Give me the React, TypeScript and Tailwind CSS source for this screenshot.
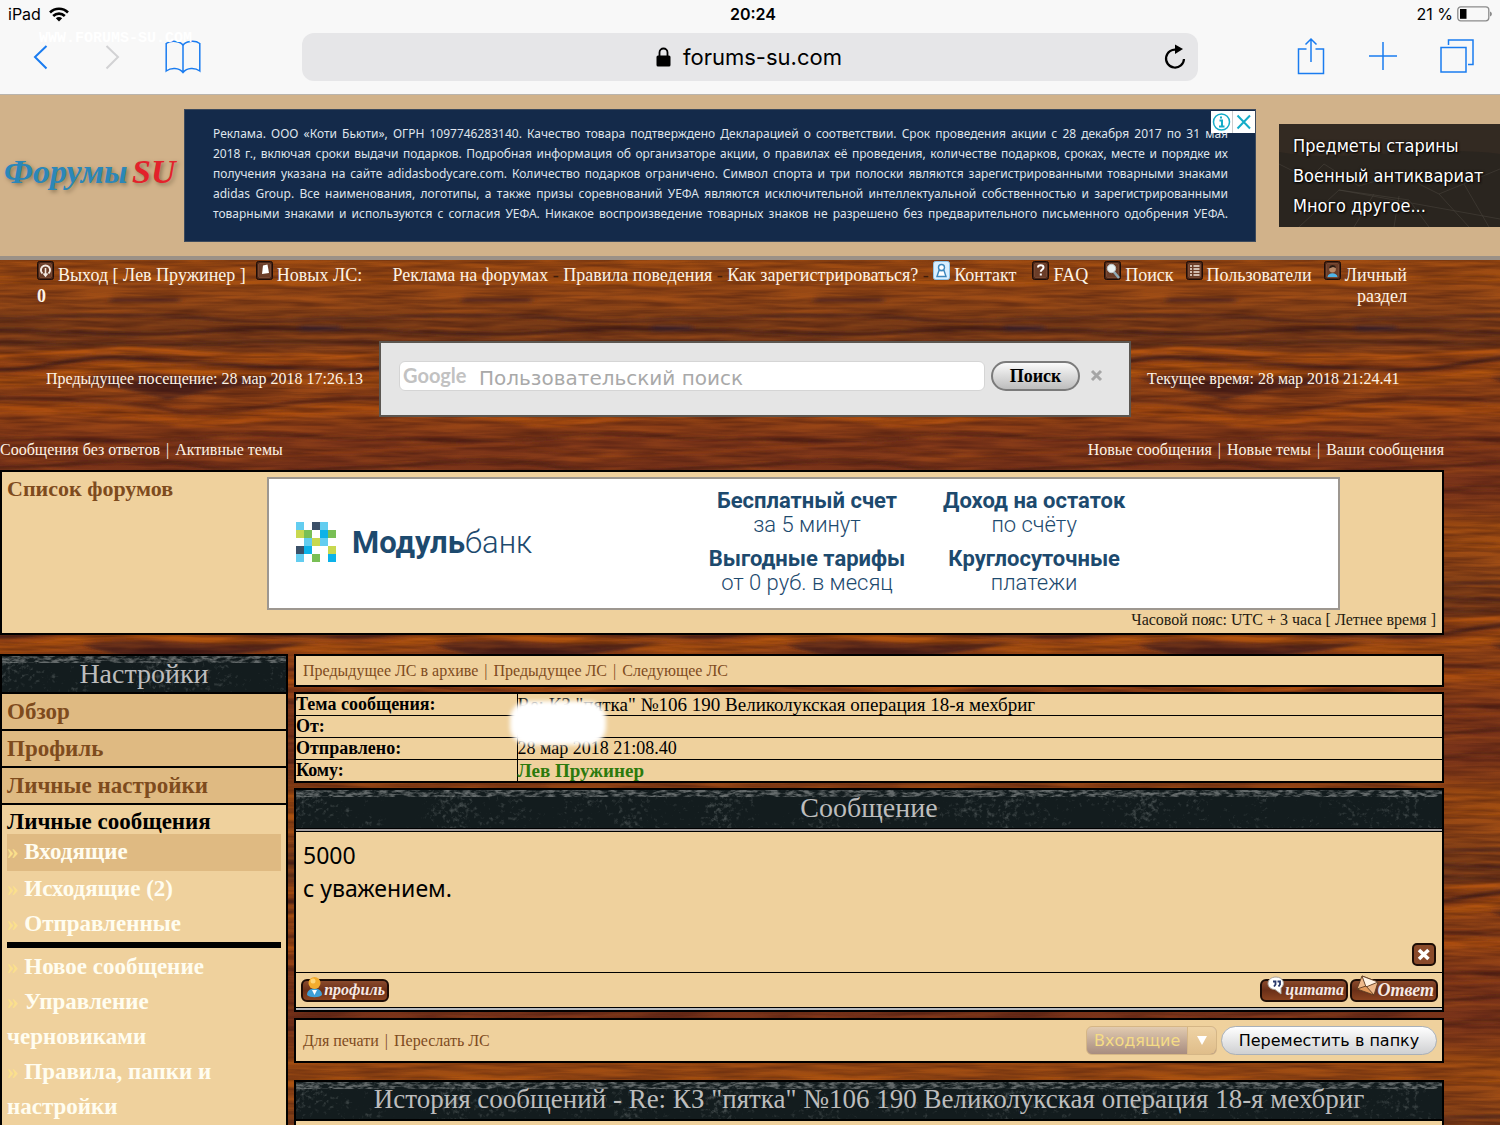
import React from "react";

const BLUE = "#1a7cf0";

const GRAIN: [string, string, number][] = [
  ["M0 96C60 96 120 84 180 92S290 96 352 96", "#b4530c", 5],
  ["M0 110C50 110 70 94 130 98S290 110 352 110", "#3c1a17", 4],
  ["M0 122C60 122 80 104 150 108S290 122 352 122", "#b0520c", 8],
  ["M0 138C60 138 120 140 170 150S290 138 352 138", "#4b1f14", 3],
  ["M0 148C60 148 120 150 170 160S290 148 352 148", "#a94b0e", 7],
  ["M0 70C60 70 120 78 200 72S310 70 352 70", "#4b2419", 4],
  ["M0 58C60 58 120 52 200 58S310 58 352 58", "#57291a", 3],
  ["M0 82C60 82 120 88 200 84S310 82 352 82", "#4f2619", 3],
  ["M0 20C60 20 120 14 200 20S310 20 352 20", "#a9510f", 5],
  ["M0 178C60 178 130 186 200 178S310 178 352 178", "#552015", 3],
  ["M0 192C60 192 130 176 200 190S310 192 352 192", "#893a15", 3],
  ["M0 208C60 208 130 192 200 206S310 208 352 208", "#552216", 3],
  ["M0 230C60 230 130 220 200 232S310 230 352 230", "#552216", 3],
];

function Wood() {
  return (
    <svg className="absolute inset-0 -z-10 h-full w-full" aria-hidden="true">
      <defs>
        <filter id="grain" x="0" y="0" width="100%" height="100%" colorInterpolationFilters="sRGB">
          <feTurbulence type="fractalNoise" baseFrequency="0.014 0.2" numOctaves={3} seed={7} stitchTiles="stitch" />
          <feColorMatrix values="0 0 0 0 0.2  0 0 0 0 0.06  0 0 0 0 0.05  2 0 0 0 -0.7" />
        </filter>
        <filter id="shine" x="0" y="0" width="100%" height="100%" colorInterpolationFilters="sRGB">
          <feTurbulence type="fractalNoise" baseFrequency="0.014 0.14" numOctaves={3} seed={23} stitchTiles="stitch" />
          <feColorMatrix values="0 0 0 0 0.75  0 0 0 0 0.36  0 0 0 0 0.08  2 0 0 0 -0.8" />
        </filter>
        <filter id="soft" filterUnits="userSpaceOnUse" x="-30" y="-20" width="412" height="307">
          <feGaussianBlur stdDeviation="3 1.600" />
        </filter>
        <linearGradient id="woodBase" x1="0" y1="0" x2="0" y2="1">
          <stop offset="0" stopColor="#9c4a10" />
          <stop offset="0.14" stopColor="#964815" />
          <stop offset="0.24" stopColor="#783a16" />
          <stop offset="0.32" stopColor="#793a18" />
          <stop offset="0.4" stopColor="#9a4512" />
          <stop offset="0.5" stopColor="#8e4115" />
          <stop offset="0.58" stopColor="#984413" />
          <stop offset="0.68" stopColor="#7d3518" />
          <stop offset="0.86" stopColor="#783219" />
          <stop offset="0.95" stopColor="#843b15" />
          <stop offset="1" stopColor="#9c4a10" />
        </linearGradient>
        <g id="streaks">
          {GRAIN.map(([d, stroke, w]) => (
            <path key={d} d={d} fill="none" stroke={stroke} strokeWidth={w} />
          ))}
          <path d="M82 118C130 108 200 122 320 114C280 124 200 130 168 140C140 132 110 128 82 118Z" fill="#3f1d18" opacity="0.800" />
          <path d="M300 68h40" stroke="#3a232a" strokeWidth="6" />
          <path d="M110 40h70" stroke="#5a2c1c" strokeWidth="5" />
        </g>
        <pattern id="wood" width="352" height="267" patternUnits="userSpaceOnUse">
          <rect width="352" height="267" fill="url(#woodBase)" />
          <g filter="url(#soft)">
            <use href="#streaks" x="-352" />
            <use href="#streaks" />
            <use href="#streaks" x="352" />
          </g>
          <rect width="352" height="267" filter="url(#shine)" opacity="0.35" />
          <rect width="352" height="267" filter="url(#grain)" opacity="0.5" />
        </pattern>
      </defs>
      <rect width="100%" height="100%" fill="url(#wood)" />
    </svg>
  );
}

function StoneTitle({ id, children, className }: { id: string; children: React.ReactNode; className: string }) {
  return (
    <h2 className={"relative isolate overflow-hidden bg-[#131c1e] text-center text-[#bdbdbd] " + className}>
      <svg className="absolute inset-0 -z-10 h-full w-full" aria-hidden="true">
        <defs>
          <filter id={id} x="0" y="0" width="100%" height="100%" colorInterpolationFilters="sRGB">
            <feTurbulence type="fractalNoise" baseFrequency="0.022 0.03" numOctaves={2} seed={4} result="cloud" />
            <feTurbulence type="fractalNoise" baseFrequency="0.22" numOctaves={3} seed={11} result="fine" />
            <feComposite in="cloud" in2="fine" operator="arithmetic" k1="1.600" k2="0" k3="0.200" k4="0" />
            <feColorMatrix values="0 0 0 0 0.45  0 0 0 0 0.48  0 0 0 0 0.48  2.600 0 0 0 -0.950" />
          </filter>
          <filter id={id + "t"} x="0" y="0" width="100%" height="100%" colorInterpolationFilters="sRGB">
            <feTurbulence type="fractalNoise" baseFrequency="0.12 0.35" numOctaves={3} seed={9} />
            <feColorMatrix values="0 0 0 0 0.5  0 0 0 0 0.52  0 0 0 0 0.52  3 0 0 0 -1.1" />
          </filter>
        </defs>
        <rect width="100%" height="100%" filter={"url(#" + id + ")"} opacity="0.7" />
        <rect width="100%" height="7" filter={"url(#" + id + "t)"} opacity="0.75" />
      </svg>
      {children}
    </h2>
  );
}

function NavIcon({ kind }: { kind: string }) {
  const light = kind === "contact";
  return (
    <svg className="mr-1 inline-block h-[19px] w-[17px] align-[1px]" viewBox="0 0 17 19" aria-hidden="true">
      <rect x="0.5" y="0.5" width="16" height="18" rx="2" fill={light ? "#d9efff" : "#4a2415"} stroke={light ? "#8fc4e8" : "#1c0d08"} />
      {!light && <rect x="2.5" y="2.5" width="12" height="14" rx="1" fill="#6b3d28" stroke="#8a5a42" strokeWidth="0.6" />}
      {kind === "exit" && (
        <g fill="none" stroke="#f3e9e2">
          <path d="M5.5 12.5A4.6 4.6 0 1 1 11.500 12.500" strokeWidth="2" />
          <path d="M8.500 7V14.500M6.500 12.500L8.500 15L10.500 12.500" strokeWidth="1.600" />
        </g>
      )}
      {kind === "mail" && <path d="M7 4.500L11.500 3.500L13 12L6 13Z" fill="#fff" />}
      {kind === "contact" && (
        <g fill="#fff" stroke="#3c87bd" strokeWidth="1.400">
          <path d="M4 15.500L6 9.500H11L13 15.500Z" />
          <circle cx="8.500" cy="6.500" r="3" />
        </g>
      )}
      {kind === "faq" && <path d="M6 6.500C6 3.500 11.500 3.500 11.500 6.500C11.500 8.500 8.800 8.500 8.800 10.800M8.800 12.500V14.500" fill="none" stroke="#fff" strokeWidth="2" />}
      {kind === "search" && (
        <g>
          <path d="M10 11L15 17" stroke="#8fa9b5" strokeWidth="2.600" />
          <circle cx="7.500" cy="7.500" r="4.200" fill="#e9f0f2" stroke="#b9c3c6" />
        </g>
      )}
      {kind === "list" && <path d="M4 5H6M7.500 5H13.500M4 8H6M7.500 8H13.500M4 11H6M7.500 11H13.500M4 14H6M7.500 14H13.500" stroke="#f3e6dc" strokeWidth="1.500" />}
      {kind === "user" && (
        <g>
          <path d="M3.500 16C4 11 13 11 13.500 16Z" fill="#4fb4e8" />
          <circle cx="8.500" cy="8" r="3.400" fill="#b98a68" />
          <path d="M5 7.500C5 3 12 3 12 7L9 6Z" fill="#2a1a12" />
        </g>
      )}
    </svg>
  );
}

function NavLink({ kind, className, children }: { kind: string; className?: string; children: React.ReactNode }) {
  return (
    <a href="#" className={className}>
      <NavIcon kind={kind} />
      {children}
    </a>
  );
}

function WoodButton({ label, kind }: { label: string; kind: string }) {
  return (
    <button
      className={
        "relative flex h-[23px] w-[88px] items-center justify-end rounded-md border-2 border-[#1d0d06] bg-linear-to-b from-[#8a4a2c] via-[#6b3018] to-[#8a4320] pr-0.5 font-bold text-[#f6e9e4] italic " +
        (kind === "reply" ? "text-lg" : "text-base")
      }
    >
      <svg className="absolute -top-[7px] left-0 h-[26px] w-[27px]" viewBox="0 0 27 26" aria-hidden="true">
        {kind === "profile" && (
          <g>
            <path d="M4 21C4 12 19 12 19 21C16 24 7 24 4 21Z" fill="#3d9fd6" />
            <path d="M9 16L11.500 21L14 16Z" fill="#fff" />
            <circle cx="11.500" cy="9" r="6" fill="#f3ac2e" />
            <circle cx="10" cy="7" r="2.500" fill="#ffd676" />
          </g>
        )}
        {kind === "quote" && (
          <g>
            <path d="M14 3C9 3 6 6 6 9.500C6 13 9 15.500 13 15.500L19 20L19 14C24 10 21 3 14 3Z" fill="#fff" stroke="#a9a39a" />
            <path d="M11 7.500h2.500v3l-1.500 2M15.500 7.500h2.500v3l-1.500 2" fill="none" stroke="#27386b" strokeWidth="1.800" />
          </g>
        )}
        {kind === "reply" && (
          <g stroke="#5e3a20" strokeWidth="0.900">
            <path d="M10 2L26 8L22 21L5 15Z" fill="#eeb98a" />
            <path d="M10 2L14 13L26 8Z" fill="#fff3e4" />
            <path d="M5 15L14 12L22 21Z" fill="#e29a5c" />
          </g>
        )}
      </svg>
      <span className="relative leading-none">{label}</span>
    </button>
  );
}

const BANK = [
  ["#63cdf0", "", "#3b5068", "#63cdf0", ""],
  ["#c8d84f", "#79bf55", "", "#0cb2e9", "#79bf55"],
  ["", "#63cdf0", "#c8d84f", "#63cdf0", ""],
  ["#3b5068", "#0cb2e9", "", "", "#c8d84f"],
  ["#63cdf0", "", "#79bf55", "", "#0cb2e9"],
];

const AD_LINES = [
  "Реклама. ООО «Коти Бьюти», ОГРН 1097746283140. Качество товара подтверждено Декларацией о соответствии. Срок проведения акции с 28 декабря 2017 по 31 мая",
  "2018 г., включая сроки выдачи подарков. Подробная информация об организаторе акции, о правилах её проведения, количестве подарков, сроках, месте и порядке их",
  "получения указана на сайте adidasbodycare.com. Количество подарков ограничено. Символ спорта и три полоски являются зарегистрированными товарными знаками",
  "adidas Group. Все наименования, логотипы, а также призы соревнований УЕФА являются исключительной интеллектуальной собственностью и зарегистрированными",
  "товарными знаками и используются с согласия УЕФА. Никакое воспроизведение товарных знаков не разрешено без предварительного письменного одобрения УЕФА.",
];

const OFFERS = [
  ["Бесплатный счет", "за 5 минут"],
  ["Доход на остаток", "по счёту"],
  ["Выгодные тарифы", "от 0 руб. в месяц"],
  ["Круглосуточные", "платежи"],
];

function Browser() {
  return (
    <div className="relative flex h-[95px] flex-col border-b border-[#b9b4ad] bg-[#f8f8f8] font-[Inter,sans-serif] text-black">
      <div className="grid h-7 grid-cols-3 items-center px-2 text-base">
        <div className="flex items-center gap-2">
          <span>iPad</span>
          <svg className="h-[15px] w-[20px]" viewBox="0 0 20 15" aria-label="Wi-Fi">
            <g fill="none" stroke="#000" strokeWidth="2.600">
              <path d="M1 5.500C6 0.500 14 0.500 19 5.500" />
              <path d="M4.200 9C7.500 5.800 12.500 5.800 15.800 9" />
            </g>
            <path d="M6.800 11.300C8.600 9.700 11.400 9.700 13.200 11.300L10 14.500Z" />
          </svg>
        </div>
        <span className="pl-1.5 text-center font-semibold">20:24</span>
        <div className="flex items-center justify-end gap-1">
          <span>21 %</span>
          <svg className="h-[16px] w-[35px]" viewBox="0 0 35 16" aria-label="Battery">
            <rect x="0.800" y="0.800" width="31" height="14" rx="3" fill="none" stroke="#8b8b8b" strokeWidth="1.300" />
            <rect x="3" y="3" width="6.500" height="9.800" fill="#000" />
            <path d="M33 5.500C35.500 6.500 35.500 9.500 33 10.500Z" fill="#8b8b8b" />
          </svg>
        </div>
      </div>
      <div className="mt-1 flex h-[50px] items-center">
        <div className="flex w-[302px] shrink-0 items-center pl-[33px]">
          <button aria-label="Back">
            <svg className="h-[26px] w-[15px]" viewBox="0 0 15 26" fill="none" stroke={BLUE} strokeWidth="2">
              <path d="M13.500 2L2 13L13.500 24.500" />
            </svg>
          </button>
          <button aria-label="Forward" className="ml-[57px]">
            <svg className="h-[26px] w-[15px]" viewBox="0 0 15 26" fill="none" stroke="#d2d2d4" strokeWidth="2">
              <path d="M1.500 2L13 13L1.500 24.500" />
            </svg>
          </button>
          <button aria-label="Bookmarks" className="ml-[45px]">
            <svg className="h-[34px] w-[36px]" viewBox="0 0 36 34" fill="none" stroke={BLUE} strokeWidth="1.500">
              <path d="M18 5.500C16 1 6 0 1.200 3.500V31C6 27.500 14 27.500 18 32.500C22 27.500 30 27.500 34.800 31V3.500C30 0 20 1 18 5.500ZM18 5V32.500" />
            </svg>
          </button>
        </div>
        <div className="relative flex h-[48px] flex-1 items-center justify-center gap-3 rounded-xl bg-[#e6e6e8] pr-0.5 text-[22px]">
          <svg className="h-[20px] w-[15px]" viewBox="0 0 15 20" aria-hidden="true">
            <rect x="0.500" y="8.500" width="14" height="11" rx="1.500" />
            <path d="M3.500 9V5.500A4 4 0 0 1 11.500 5.500V9" fill="none" stroke="#000" strokeWidth="1.800" />
          </svg>
          <span>forums-su.com</span>
          <button aria-label="Reload" className="absolute right-3">
            <svg className="h-[26px] w-[22px]" viewBox="0 0 22 26" aria-hidden="true">
              <path d="M13 5.800A9 9 0 1 0 20 15" fill="none" stroke="#000" strokeWidth="2.200" />
              <path d="M11 0.500L19 5L11 10Z" />
            </svg>
          </button>
        </div>
        <div className="flex w-[302px] shrink-0 items-center justify-between pr-[26px] pb-[3px] pl-[99px]">
          <button aria-label="Share">
            <svg className="h-[38px] w-[28px]" viewBox="0 0 28 38" fill="none" stroke={BLUE} strokeWidth="1.500">
              <path d="M9.500 12H1.500V36.500H26.500V12H18.500M14 25V2M8.500 7.500L14 2L19.500 7.500" />
            </svg>
          </button>
          <button aria-label="New tab">
            <svg className="h-[30px] w-[30px]" viewBox="0 0 30 30" stroke={BLUE} strokeWidth="1.500">
              <path d="M15 1V29M1 15H29" />
            </svg>
          </button>
          <button aria-label="Tabs">
            <svg className="h-[34px] w-[34px]" viewBox="0 0 34 34" fill="none" stroke={BLUE} strokeWidth="1.500">
              <path d="M1 8.500H26V33H1ZM8.500 6V1H33V25.500H28" />
            </svg>
          </button>
        </div>
      </div>
      <span className="absolute top-[30px] left-[39px] font-['Liberation_Mono',monospace] text-[15px] leading-[18px] font-bold text-white">WWW.FORUMS-SU.COM</span>
    </div>
  );
}

function SideSub({ children, active }: { children: React.ReactNode; active?: boolean }) {
  return (
    <li className={active ? "bg-[#dfba82] pb-0.5" : ""}>
      <a href="#">
        <span className="text-[#fbe08c]">»</span> {children}
      </a>
    </li>
  );
}

function Bar() {
  return <span className="px-1.5">|</span>;
}

function Dash() {
  return <span className="text-[#3d1c0c]">-</span>;
}

export default function App() {
  return (
    <div className="flex min-h-screen flex-col overflow-hidden bg-[#7a3814] font-['Liberation_Serif',serif]">
      <Browser />

      <header className="flex h-[165px] items-start border-b-4 border-[#9b9187] bg-[#d1b28a]">
        <a href="#" className="w-[184px] shrink-0 self-center pb-2 pl-1 text-[34px] leading-none font-bold whitespace-nowrap text-[#2b87b8] italic [text-shadow:2px_2px_4px_#8a7556]">
          Форумы <span className="-ml-1 text-[#e3222b]">SU</span>
        </a>
        <div className="relative mt-[14px] h-[133px] min-w-0 flex-1 overflow-hidden border border-[#3d4a5c] bg-[#142a4a] pt-[14px] pr-[27px] pl-[28px] font-['Noto_Sans',sans-serif] text-xs text-[#dfe4ec]">
          {AD_LINES.map((l) => (
            <p key={l} className="leading-[20px] whitespace-nowrap [text-align-last:justify]">
              {l}
            </p>
          ))}
          <div className="absolute top-px right-0 flex bg-white">
            <button aria-label="Об этой рекламе" className="border-r border-[#ccc]">
              <svg className="h-[22px] w-[21px]" viewBox="0 0 21 22" fill="none" stroke="#15acc8">
                <circle cx="10.500" cy="11" r="8" strokeWidth="1.500" />
                <path d="M8.500 9.500H11V15.500M8 15.500H13.500M10 5.500V7.500" strokeWidth="2" />
              </svg>
            </button>
            <button aria-label="Закрыть рекламу">
              <svg className="h-[22px] w-[22px]" viewBox="0 0 22 22" stroke="#15acc8" strokeWidth="2">
                <path d="M4.500 4.500L17 17.500M17 4.500L4.500 17.500" />
              </svg>
            </button>
          </div>
        </div>
        <a href="#" className="relative isolate mt-[29px] ml-[23px] h-[103px] w-[221px] shrink-0 bg-[#2a251f] pt-[7px] pl-[14px] font-['DejaVu_Sans_Condensed','DejaVu_Sans',sans-serif] text-lg leading-[30px] whitespace-nowrap text-white [text-shadow:0_0_3px_#000,1px_1px_2px_#000]">
          <svg className="absolute inset-0 -z-10 h-full w-full" viewBox="0 0 221 103" fill="none" stroke="#4a453d" strokeWidth="0.800" aria-hidden="true">
            <path d="M0 0H221V30C150 20 60 40 0 28Z" fill="#332a22" stroke="none" />
            <path d="M0 40L30 55L45 40L80 62L120 50L160 70L221 45M20 103L60 66L130 76L150 103M60 66L221 95M95 70L75 103M120 72L115 103M160 70L190 103M185 60L210 103" opacity="0.700" />
          </svg>
          Предметы старины
          <br />
          Военный антиквариат
          <br />
          Много другое...
        </a>
      </header>

      <main className="relative isolate flex flex-1 flex-col pr-14">
        <Wood />
        <nav className="flex h-[81px] justify-between pt-px pr-[37px] pl-[37px] text-lg leading-[21px] text-[#fdf3e6]">
          <div className="whitespace-nowrap">
            <NavLink kind="exit">Выход [ Лев Пружинер ]</NavLink>
            <NavLink kind="mail" className="ml-2.5">
              Новых ЛС:
            </NavLink>
            <br />
            <b>0</b>
          </div>
          <div className="text-right whitespace-nowrap">
            <a href="#">Реклама на форумах</a> <Dash /> <a href="#">Правила поведения</a> <Dash /> <a href="#">Как зарегистрироваться?</a> <Dash />{" "}
            <NavLink kind="contact">Контакт</NavLink>
            <NavLink kind="faq" className="ml-4">
              FAQ
            </NavLink>
            <NavLink kind="search" className="ml-4">
              Поиск
            </NavLink>
            <NavLink kind="list" className="ml-3">
              Пользователи
            </NavLink>
            <NavLink kind="user" className="ml-3">
              Личный
              <br />
              раздел
            </NavLink>
          </div>
        </nav>

        <div className="grid grid-cols-[379fr_752fr_313fr] items-center text-base text-[#fdf3e6]">
          <p className="pr-4 text-right whitespace-nowrap">Предыдущее посещение: 28 мар 2018 17:26.13</p>
          <form className="flex h-[76px] items-center border-2 border-[#5b5650] bg-[#e5e5e5] pr-[26px] pb-[7px] pl-[18px]" onSubmit={(e) => e.preventDefault()}>
            <div className="relative flex-1">
              <input
                aria-label="Пользовательский поиск"
                placeholder="Пользовательский поиск"
                className="block h-[30px] w-full rounded-md border border-[#d5d5d5] bg-white pt-1 pl-[79px] font-['DejaVu_Sans',sans-serif] text-xl leading-6 text-black placeholder:text-[#a9a9a9]"
              />
              <span className="absolute top-0.5 left-1 font-[Lato,sans-serif] text-xl leading-6 font-bold text-[#c2c2c2]">Google</span>
            </div>
            <button className="ml-1.5 h-[30px] w-[89px] rounded-full border-2 border-[#7b7b7b] bg-linear-to-b from-[#fafafa] to-[#bdbdbd] text-lg leading-none font-bold text-black">Поиск</button>
            <button type="button" aria-label="Очистить" className="ml-[10px]">
              <svg className="h-[13px] w-[13px]" viewBox="0 0 13 13" stroke="#a6a6a6" strokeWidth="3">
                <path d="M2 2L11 11M11 2L2 11" />
              </svg>
            </button>
          </form>
          <p className="pl-4 whitespace-nowrap">Текущее время: 28 мар 2018 21:24.41</p>
        </div>

        <div className="mt-5 flex h-[33px] items-center justify-between pt-px pb-2 text-base text-[#fdf3e6]">
          <div>
            <a href="#">Сообщения без ответов</a>
            <Bar />
            <a href="#">Активные темы</a>
          </div>
          <div>
            <a href="#">Новые сообщения</a>
            <Bar />
            <a href="#">Новые темы</a>
            <Bar />
            <a href="#">Ваши сообщения</a>
          </div>
        </div>

        <section className="h-[165px] border-2 border-black bg-[#efd19d] pt-[5px] pr-1.5 pl-[5px]">
          <div className="flex">
            <a href="#" className="w-[260px] shrink-0 text-[22px] leading-6 font-bold text-[#7e4b1d]">
              Список форумов
            </a>
            <div className="mr-[96px] flex h-[133px] flex-1 items-center border-2 border-[#9d9790] bg-white pb-[3px] pl-[27px] font-[Roboto,sans-serif] text-[#1d4a6e]">
              <svg className="h-[40px] w-[40px]" viewBox="0 0 40 40" aria-hidden="true">
                {BANK.map((row, y) => row.map((c, x) => (c ? <rect key={x + "-" + y} x={x * 8} y={y * 8} width="8" height="8" fill={c} /> : null)))}
              </svg>
              <div className="ml-4 w-[347px] text-[31px] leading-none">
                <b>Модуль</b>
                <span className="font-light">банк</span>
              </div>
              <div className="grid grid-cols-[216px_auto] justify-items-center gap-x-7 gap-y-2.5">
                {OFFERS.map(([a, b]) => (
                  <div key={a} className="text-center text-[22px] leading-6">
                    <div className="font-bold">{a}</div>
                    <div className="font-light">{b}</div>
                  </div>
                ))}
              </div>
            </div>
          </div>
          <p className="text-right text-base leading-[19px] text-[#241a10]">Часовой пояс: UTC + 3 часа [ Летнее время ]</p>
        </section>

        <div className="mt-[19px] flex flex-1 items-stretch gap-1.5">
          <aside className="w-[288px] shrink-0 border-2 border-b-0 border-black bg-[#efd19d]">
            <StoneTitle id="stoneA" className="h-9 text-[28px] leading-[35px]">
              Настройки
            </StoneTitle>
            <ul className="text-[23px] font-bold text-[#7e4b1d]">
              {["Обзор", "Профиль", "Личные настройки"].map((t) => (
                <li key={t} className="h-[37px] border-t-2 border-black bg-[#dfba82] pl-[5px] leading-[35px]">
                  <a href="#">{t}</a>
                </li>
              ))}
              <li className="border-t-2 border-black px-[5px]">
                <a href="#" className="block h-[29px] leading-[33px] text-black">
                  Личные сообщения
                </a>
                <ul className="text-[23px] leading-[35px] text-[#fffdf0]">
                  <SideSub active>Входящие</SideSub>
                  <SideSub>Исходящие (2)</SideSub>
                  <SideSub>Отправленные</SideSub>
                  <li className="my-px h-1.5 bg-black" role="separator" />
                  <SideSub>Новое сообщение</SideSub>
                  <SideSub>
                    Управление
                    <br />
                    черновиками
                  </SideSub>
                  <SideSub>
                    Правила, папки и
                    <br />
                    настройки
                  </SideSub>
                </ul>
              </li>
            </ul>
          </aside>

          <div className="flex min-w-0 flex-1 flex-col">
            <div className="flex h-[33px] items-center border-2 border-black bg-[#efd19d] pl-[7px] text-base text-[#7e4b1d]">
              <a href="#">Предыдущее ЛС в архиве</a>
              <Bar />
              <a href="#">Предыдущее ЛС</a>
              <Bar />
              <a href="#">Следующее ЛС</a>
            </div>

            <div className="relative mt-[5px]">
              <table className="w-full border-collapse border-2 border-black bg-[#efd19d] text-left text-lg leading-[21px]">
                <tbody>
                  <tr className="border-b border-black">
                    <th className="w-[222px] border-r border-black p-0 font-bold">Тема сообщения:</th>
                    <td className="p-0 text-[19px]">Re: КЗ "пятка" №106 190 Великолукская операция 18-я мехбриг</td>
                  </tr>
                  <tr className="border-b border-black">
                    <th className="border-r border-black p-0 font-bold">От:</th>
                    <td className="p-0" />
                  </tr>
                  <tr className="border-b border-black">
                    <th className="border-r border-black p-0 font-bold">Отправлено:</th>
                    <td className="p-0">28 мар 2018 21:08.40</td>
                  </tr>
                  <tr>
                    <th className="border-r border-black p-0 font-bold">Кому:</th>
                    <td className="p-0 text-[19px] font-bold text-[#2c7a0c]">
                      <a href="#">Лев Пружинер</a>
                    </td>
                  </tr>
                </tbody>
              </table>
              <div className="absolute top-[9px] left-[216px] h-[44px] w-[96px] rounded-[18px] bg-white blur-[2px]" />
            </div>

            <section className="mt-[5px] border-2 border-black bg-[#efd19d]">
              <StoneTitle id="stoneB" className="h-[38px] text-[28px] leading-[35px]">
                Сообщение
              </StoneTitle>
              <div className="h-[4px] border-y border-black bg-[#a5a0a0]" />
              <div className="relative h-[140px] pt-[7px] pl-[7px] font-['Noto_Sans',sans-serif] text-[23px] leading-[33px] text-black">
                5000
                <br />
                с уважением.
                <button aria-label="Удалить" className="absolute right-1.5 bottom-1.5">
                  <svg className="h-[23px] w-[24px]" viewBox="0 0 24 23" aria-hidden="true">
                    <rect x="1" y="1" width="22" height="21" rx="4" fill="#8a4a2a" stroke="#1d0d06" strokeWidth="2" />
                    <path d="M7 7L16.500 16M16.500 7L7 16" stroke="#fff" strokeWidth="3.600" />
                  </svg>
                </button>
              </div>
              <div className="flex h-[35px] items-center justify-between border-t border-black pr-1 pl-[5px]">
                <WoodButton label="профиль" kind="profile" />
                <div className="flex gap-0.5">
                  <WoodButton label="цитата" kind="quote" />
                  <WoodButton label="Ответ" kind="reply" />
                </div>
              </div>
              <div className="h-[3px] border-t border-black bg-[#b9bcc0]" />
            </section>

            <div className="mt-1.5 flex h-[45px] items-center border-2 border-black bg-[#efd19d] pr-[5px] pl-[7px] text-base text-[#7e4b1d]">
              <a href="#">Для печати</a>
              <Bar />
              <a href="#">Переслать ЛС</a>
              <div className="relative mr-1 ml-auto">
                <select
                  aria-label="Папка"
                  className="h-[29px] w-[131px] appearance-none rounded-md border border-[#d5b686] bg-linear-to-b from-[#e2cbb0] to-[#a78c80] pl-[7px] font-['DejaVu_Sans',sans-serif] text-base text-[#f5dc86]"
                >
                  <option>Входящие</option>
                </select>
                <span className="pointer-events-none absolute top-px right-px flex h-[27px] w-[29px] items-center justify-center rounded-r-md border-l border-[#d5b686] bg-linear-to-b from-[#efd3a4] to-[#dfbd8a]">
                  <svg className="h-[9px] w-[10px]" viewBox="0 0 10 9" fill="#fff" aria-hidden="true">
                    <path d="M0 0H10L5 9Z" />
                  </svg>
                </span>
              </div>
              <button className="h-[29px] w-[216px] rounded-full border border-[#a9b0b8] bg-linear-to-b from-white to-[#cfd0d2] font-['DejaVu_Sans',sans-serif] text-base text-black">Переместить в папку</button>
            </div>

            <section className="mt-[17px] flex-1 border-2 border-b-0 border-black bg-[#efd19d]">
              <StoneTitle id="stoneC" className="h-[39px] border-b-2 border-black text-[27px] leading-[35px]">
                История сообщений - Re: КЗ "пятка" №106 190 Великолукская операция 18-я мехбриг
              </StoneTitle>
            </section>
          </div>
        </div>
      </main>
    </div>
  );
}
